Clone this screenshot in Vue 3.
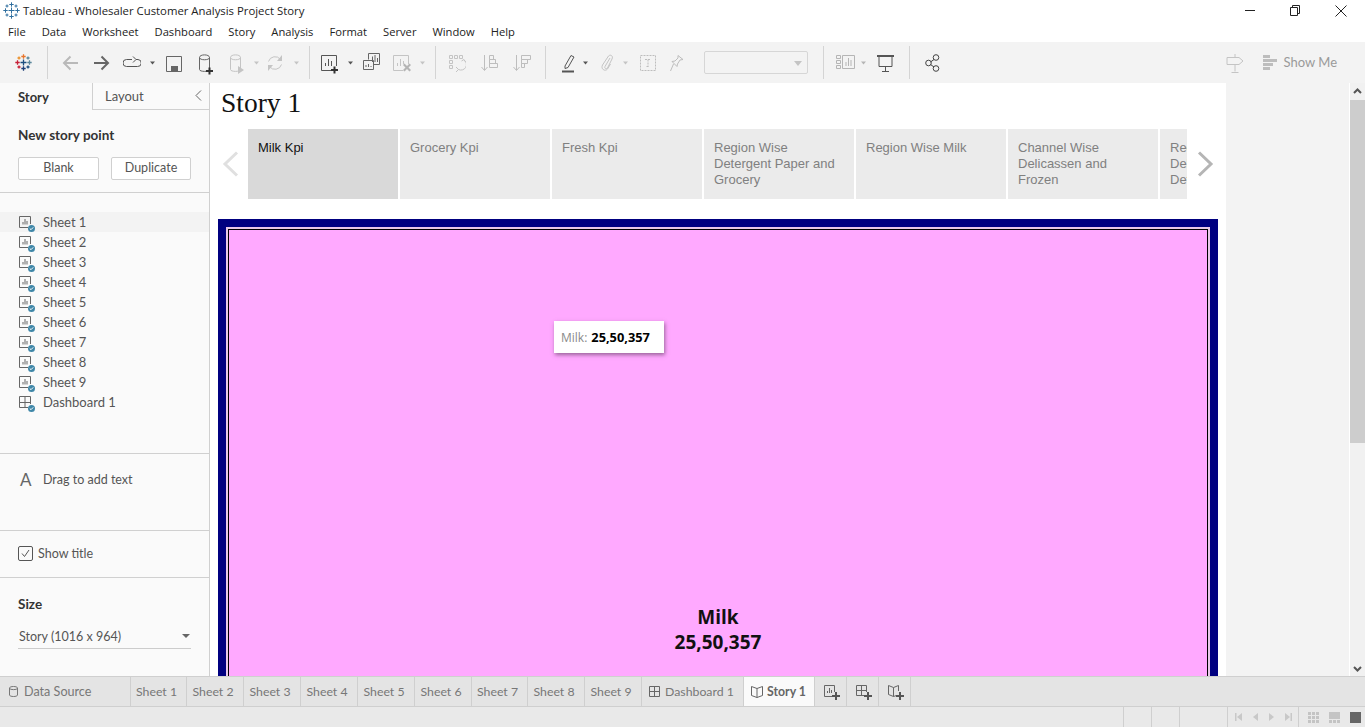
<script setup>
const menus = ['File', 'Data', 'Worksheet', 'Dashboard', 'Story', 'Analysis', 'Format', 'Server', 'Window', 'Help']

const plus = 'M9.5 16.5h2V19H14v2h-2.5v2.5h-2V21H7v-2h2.5z'
const cyl = 'M.5 6.5c0-3.5 10-3.5 10 0v12c0 2.5-10 2.5-10 0zM.5 6.5c0 3 10 3 10 0'
const sep = { kind: 'sep' }
const caret = (gap, c = '#555') => ({ gap, w: 5, f: 'M0 10.5h5L2.5 13.5z', fc: c })

const tools = [
  { gap: 15, w: 17, kind: 'logo' },
  { ...sep, gap: 15 },
  { gap: 14, w: 16, s: 'M16 12H2M8.5 5.5 2 12l6.5 6.5', c: '#b9b9b9', sw: 2 },
  { gap: 16, w: 16, s: 'M0 12h14M7.5 5.5 14 12l-6.5 6.5', c: '#666', sw: 2 },
  { gap: 13, w: 18, s: 'M9 8.5H3.5a3.5 3.5 0 0 0 0 7h11a3.5 3.5 0 0 0 .5-7h-2M10 5.5l3 3-3 3', c: '#555' },
  caret(9),
  { gap: 11, w: 16, s: 'M.5 5.5h15v15H.5z', f: 'M5 15h7v5H5z', c: '#666', fc: '#666' },
  { gap: 17, w: 15, s: cyl, f: plus, c: '#666', fc: '#333' },
  { gap: 16, w: 15, s: cyl, f: 'M8 15l6 4-6 4z', c: '#c4c4c4', fc: '#c4c4c4' },
  caret(9, '#c4c4c4'),
  { gap: 8, w: 16, s: 'M1.5 10.5a6.8 6.8 0 0 1 12-2M14.5 13.5a6.8 6.8 0 0 1-12 2', f: 'M15 4v6h-5zM1 20v-6h5z', c: '#c4c4c4', fc: '#c4c4c4' },
  caret(11, '#c4c4c4'),
  { ...sep, gap: 10 },
  { gap: 11, w: 18, s: 'M12 19.500H.5v-15h15V15M4.500 15v-3M7.500 15V8M10.500 15v-5', f: 'M12.500 15.500h2V18H17v2h-2.500v2.500h-2V20H10v-2h2.500z', c: '#555', fc: '#333' },
  caret(9),
  { gap: 10, w: 17, s: 'M5.500 8.500V2.500h11v11H10.500M.5 9.500h10v9H.5zM9.500 11V5.500M12 11V4M14.500 11V7M3 16v-2M5.500 16v-3M8 16v-1', c: '#666' },
  { gap: 13, w: 18, s: 'M10 19.500H.5v-15h15V13M4.500 15v-3M7.500 15V8M10.500 13v-3', f: 'M10 14l1.500-1.500 2.500 2.500 2.500-2.500L18 14l-2.500 2.500L18 19l-1.500 1.500L14 18l-2.500 2.500L10 19l2.500-2.500z', c: '#c4c4c4', fc: '#b4b4b4' },
  caret(9, '#c4c4c4'),
  { ...sep, gap: 10 },
  { gap: 13, w: 17, s: 'M.5 4.500h3v3h-3zM5.500 4.500h3v3h-3zM10.500 4.500h3v3h-3zM.5 9.500h3v3h-3zM.5 14.500h3v3h-3zM15 9a5.500 5.500 0 0 1-5.500 9.500M7 16l2.500 2.500L7 21M12.500 10 15 8.500l1.500 2.500', c: '#c4c4c4' },
  { gap: 15, w: 17, s: 'M3.500 4v15M.5 16l3 3.500 3-3.500M8.500 4.500h4v4h-4zM8.500 8.500h6v4h-6zM8.500 12.500h8v4h-8z', c: '#bdbdbd' },
  { gap: 15, w: 18, s: 'M3.500 4v15M.5 16l3 3.500 3-3.500M8.500 4.500h9v4h-9zM8.500 8.500h6v4h-6zM8.500 12.500h3v4h-3z', c: '#bdbdbd' },
  { ...sep, gap: 14 },
  { gap: 16, w: 13, s: 'M3 15 9 4.500l3 1.500L6 16.500l-3 1z', f: 'M0 19.500h12v2H0z', c: '#555', fc: '#555' },
  caret(8),
  { gap: 12, w: 13, s: 'M10 7 5 15.500c-1 2 1.500 3 2.500 1.500L12 8c1.500-3-1.500-5-3.500-3L2.500 14c-2 4 2.500 7 5 4l3-5', c: '#c4c4c4' },
  caret(10, '#c4c4c4'),
  { gap: 12, w: 16, s: 'M.5 4.500h15v15H.5zM5 8.500h6M8 8.500v7M6.500 15.500h3', c: '#bdbdbd', dash: true },
  { gap: 14, w: 14, s: 'M8 4.500l5 4-3 .5-2.500 4-.5 2.500-5-5 3-.5 3-3zM3.500 13l-3 7', c: '#bdbdbd' },
  { gap: 20, kind: 'combo' },
  { ...sep, gap: 15 },
  { gap: 12, w: 20, s: 'M.5 4.500h4v3h-4zM.5 9.500h4v3h-4zM.5 14.500h4v3h-4zM6.500 4.500h12v13h-12zM10 15v-4M12.500 15V7M15 15V9', c: '#b5b5b5' },
  caret(5, '#b5b5b5'),
  { gap: 11, w: 17, s: 'M2 6v9.500h13V6M8.500 15.500v5M5 20.500h7', f: 'M0 4h17v2H0z', c: '#555', fc: '#555' },
  { ...sep, gap: 15 },
  { gap: 15, w: 15, s: 'M5.500 11 9 8.500M5.500 13.500 9 16', c: '#444', circles: true },
]

const sheets = ['Sheet 1', 'Sheet 2', 'Sheet 3', 'Sheet 4', 'Sheet 5', 'Sheet 6', 'Sheet 7', 'Sheet 8', 'Sheet 9']
const tabWidths = [56, 57, 57, 57, 57, 57, 56, 57, 57]
const tabs = sheets.map((name, i) => ({ name, w: tabWidths[i] }))

const points = [
  { text: 'Milk Kpi', on: true },
  { text: 'Grocery Kpi' },
  { text: 'Fresh Kpi' },
  { text: 'Region Wise Detergent Paper and Grocery' },
  { text: 'Region Wise Milk' },
  { text: 'Channel Wise Delicassen and Frozen' },
  { text: 'Region Wise Delicassen and Detergent' },
]

// tableau mark, same crosses in title bar and toolbar
const crosses = [
  { x: 8.5, y: 8.5, r: 3, c: '#1f4f7f' },
  { x: 8.5, y: 2.5, r: 2.2, c: '#e8762d' },
  { x: 8.5, y: 14.5, r: 2.2, c: '#1f3f77' },
  { x: 2.5, y: 8.5, r: 2.2, c: '#c72037' },
  { x: 14.5, y: 8.5, r: 2.2, c: '#5b879b' },
  { x: 4, y: 4, r: 1.5, c: '#eb912b' },
  { x: 13, y: 4, r: 1.5, c: '#5b879b' },
  { x: 4, y: 13, r: 1.5, c: '#c72037' },
  { x: 13, y: 13, r: 1.5, c: '#1f4f7f' },
]
const crossPath = (k) => `M${k.x - k.r} ${k.y}h${k.r * 2}M${k.x} ${k.y - k.r}v${k.r * 2}`
</script>

<template>
  <div class="app">
    <header class="titlebar">
      <svg class="app-icon" width="17" height="17" viewBox="0 0 17 17" fill="none" stroke="#2f6f9f" stroke-width="1">
        <path v-for="k in crosses" :key="k.x + '-' + k.y" :d="crossPath(k)" />
      </svg>
      <span class="title-text">Tableau - Wholesaler Customer Analysis Project Story</span>
      <div class="win-btns">
        <svg width="11" height="11" viewBox="0 0 11 11"><path d="M0 5.500h10" stroke="#222" /></svg>
        <svg width="11" height="11" viewBox="0 0 11 11" fill="none" stroke="#222"><path d="M.5 2.500h7v8h-7zM2.500 2.500v-2h7v8h-2" /></svg>
        <svg width="12" height="12" viewBox="0 0 12 12" fill="none" stroke="#222"><path d="M.5.5l11 11M11.500.5l-11 11" /></svg>
      </div>
    </header>

    <nav class="menubar">
      <span v-for="m in menus" :key="m">{{ m }}</span>
    </nav>

    <div class="toolbar">
      <template v-for="(t, i) in tools" :key="i">
        <div v-if="t.kind === 'sep'" class="tool-sep" :style="{ marginLeft: t.gap + 'px' }"></div>
        <div v-else-if="t.kind === 'combo'" class="combo" :style="{ marginLeft: t.gap + 'px' }"><i class="combo-caret"></i></div>
        <svg v-else-if="t.kind === 'logo'" width="17" height="17" viewBox="0 0 17 17" fill="none" stroke-width="1.300" :style="{ marginLeft: t.gap + 'px' }">
          <path v-for="k in crosses" :key="k.x + '-' + k.y" :d="crossPath(k)" :stroke="k.c" />
        </svg>
        <svg v-else :width="t.w" height="24" :viewBox="`0 0 ${t.w} 24`" fill="none" :style="{ marginLeft: t.gap + 'px' }">
          <path v-if="t.s" :d="t.s" :stroke="t.c" :stroke-width="t.sw || 1" :stroke-dasharray="t.dash ? '2 1' : null" />
          <path v-if="t.f" :d="t.f" :fill="t.fc" />
          <g v-if="t.circles" :stroke="t.c">
            <circle cx="3.500" cy="12" r="2.800" />
            <circle cx="11" cy="6.500" r="2.800" />
            <circle cx="11" cy="17.500" r="2.800" />
          </g>
        </svg>
      </template>
      <div class="tool-right">
        <svg width="18" height="24" viewBox="0 0 18 24" fill="none" stroke="#c4c4c4"><path d="M1 6.500h12l4 3.500-4 3.500H1zM9 3v3.500M9 13.500v7M5.500 21.500h7" /></svg>
        <svg class="showme-bars" width="14" height="16" viewBox="0 0 14 16" fill="#bdbdbd"><path d="M0 0h7v3H0zM0 4h14v3H0zM0 8h10v3H0zM0 12h7v3H0z" /></svg>
        <span class="showme">Show Me</span>
      </div>
    </div>

    <div class="body">
      <aside class="side">
        <div class="side-tabs">
          <div class="side-tab active">Story</div>
          <div class="side-tab">Layout</div>
          <svg class="collapse" width="7" height="11" viewBox="0 0 7 11" fill="none" stroke="#666"><path d="M6 .5 1 5.500l5 5" /></svg>
        </div>

        <section class="new-point">
          <h3>New story point</h3>
          <div class="new-btns">
            <button class="btn blank">Blank</button>
            <button class="btn dup">Duplicate</button>
          </div>
        </section>

        <section class="sheet-list">
          <div v-for="(name, i) in sheets" :key="name" class="sheet-row" :class="{ hover: i === 0 }">
            <svg class="sheet-icon" width="16" height="16" viewBox="0 0 16 16" fill="none">
              <path d="M9 11.500H.5V.5h11V8M4 8.500V6M6 8.500V3M8 8.500V5" stroke="#666" />
              <circle cx="12.500" cy="12.500" r="3.500" fill="#3f87a8" />
              <path d="M10.800 12.500l1.200 1.200 2.200-2.300" stroke="#fff" />
            </svg>
            <span>{{ name }}</span>
          </div>
          <div class="sheet-row">
            <svg class="sheet-icon" width="16" height="16" viewBox="0 0 16 16" fill="none">
              <path d="M9 11.500H.5V.5h11V8M.5 6.500h11M6 .5v11" stroke="#666" />
              <circle cx="12.500" cy="12.500" r="3.500" fill="#3f87a8" />
              <path d="M10.800 12.500l1.200 1.200 2.200-2.300" stroke="#fff" />
            </svg>
            <span>Dashboard 1</span>
          </div>
        </section>

        <section class="drag-text">
          <span class="big-a">A</span>
          <span>Drag to add text</span>
        </section>

        <section class="show-title">
          <svg width="15" height="15" viewBox="0 0 15 15" fill="none" stroke="#555"><rect x=".5" y=".5" width="14" height="14" rx="1.500" /><path d="M4 7.500l2.500 3L11 4" /></svg>
          <span>Show title</span>
        </section>

        <section class="size">
          <h3>Size</h3>
          <div class="size-select">
            <span>Story (1016 x 964)</span>
            <i class="size-caret"></i>
          </div>
        </section>
      </aside>

      <main class="story">
        <h1 class="story-title">Story 1</h1>
        <div class="nav-row">
          <svg class="nav-arrow" width="18" height="26" viewBox="0 0 18 26" fill="none" stroke="#e0e0e0" stroke-width="3"><path d="M15 1.500 3 13l12 11.500" /></svg>
          <div class="points">
            <div v-for="p in points" :key="p.text" class="point" :class="{ on: p.on }">{{ p.text }}</div>
          </div>
          <svg class="nav-arrow next" width="18" height="26" viewBox="0 0 18 26" fill="none" stroke="#b5b5b5" stroke-width="3"><path d="M3 1.500 15 13 3 24.500" /></svg>
        </div>

        <div class="frame">
          <div class="frame-inner">
            <div class="kpi">
              <div>Milk</div>
              <div>25,50,357</div>
            </div>
          </div>
          <div class="tooltip"><span>Milk:</span> <b>25,50,357</b></div>
        </div>
      </main>

      <div class="gutter"></div>

      <div class="scrollbar">
        <svg class="sb-up" width="9" height="6" viewBox="0 0 9 6" fill="none" stroke="#555" stroke-width="2"><path d="M1 5l3.500-3.500L8 5" /></svg>
        <div class="sb-thumb"></div>
        <svg class="sb-down" width="9" height="6" viewBox="0 0 9 6" fill="none" stroke="#555" stroke-width="2"><path d="M1 1l3.500 3.500L8 1" /></svg>
      </div>
    </div>

    <div class="tabbar">
      <div class="tab source">
        <svg width="9" height="11" viewBox="0 0 9 11" fill="none" stroke="#777"><path d="M.5 2c0-2 8-2 8 0v7c0 2-8 2-8 0zM.5 2.500c1 1.500 7 1.500 8 0" /></svg>
        <span>Data Source</span>
      </div>
      <div v-for="t in tabs" :key="t.name" class="tab sheet" :style="{ width: t.w + 'px' }">{{ t.name }}</div>
      <div class="tab dash">
        <svg width="12" height="11" viewBox="0 0 12 11" fill="none" stroke="#666"><path d="M.5.5h10v10H.5zM.5 5.500h10M5.500.5v10" /></svg>
        <span>Dashboard 1</span>
      </div>
      <div class="tab current">
        <svg width="12" height="12" viewBox="0 0 12 12" fill="none" stroke="#666"><path d="M6 2.500 .5.5v9L6 11.500l5.500-2v-9zM6 2.500v9" /></svg>
        <span>Story 1</span>
      </div>
      <div class="tab add">
        <svg width="18" height="16" viewBox="0 0 18 16" fill="none"><path d="M8 11.500H.5V.5h10V7M3.500 8V6M5.500 8V3M7.500 8V5" stroke="#666" /><path d="M11 7h2v3h3v2h-3v3h-2v-3H8v-2h3z" fill="#555" /></svg>
      </div>
      <div class="tab add">
        <svg width="18" height="16" viewBox="0 0 18 16" fill="none"><path d="M8 10.500H.5V.5h10V7M.5 5.500h10M5.500.5v10" stroke="#666" /><path d="M11 7h2v3h3v2h-3v3h-2v-3H8v-2h3z" fill="#555" /></svg>
      </div>
      <div class="tab add">
        <svg width="18" height="16" viewBox="0 0 18 16" fill="none"><path d="M5.500 2.500 .5.500v9l5 2 3-1M5.500 2.500l5-2V6M5.500 2.500v9" stroke="#666" /><path d="M11 7h2v3h3v2h-3v3h-2v-3H8v-2h3z" fill="#555" /></svg>
      </div>
    </div>

    <footer class="statusbar">
      <div class="st-cell first"></div>
      <div class="st-cell first"></div>
      <div class="st-cell wide"></div>
      <div class="st-nav">
        <svg width="7" height="8" viewBox="0 0 7 8" fill="#c8c8c8"><path d="M0 0h1.500v8H0zM7 0v8L2 4z" /></svg>
        <svg width="5" height="8" viewBox="0 0 5 8" fill="#c8c8c8"><path d="M5 0v8L0 4z" /></svg>
        <svg width="5" height="8" viewBox="0 0 5 8" fill="#c8c8c8"><path d="M0 0v8l5-4z" /></svg>
        <svg width="7" height="8" viewBox="0 0 7 8" fill="#c8c8c8"><path d="M5.500 0H7v8H5.500zM0 0v8l5-4z" /></svg>
      </div>
      <div class="st-views">
        <svg width="11" height="11" viewBox="0 0 11 11" fill="#c4c4c4"><path d="M0 0h3v3H0zM4 0h3v3H4zM8 0h3v3H8zM0 4h3v3H0zM4 4h3v3H4zM8 4h3v3H8zM0 8h3v3H0zM4 8h3v3H4zM8 8h3v3H8z" /></svg>
        <svg width="11" height="11" viewBox="0 0 11 11" fill="#c4c4c4"><path d="M0 0h11v7H0zM0 8h3v3H0zM4 8h3v3H4zM8 8h3v3H8z" /></svg>
        <svg width="11" height="11" viewBox="0 0 11 11" fill="#666"><path d="M0 0h11v11H0z" /></svg>
      </div>
    </footer>
  </div>
</template>

<style>
html, body { margin: 0; overflow: hidden; }
</style>

<style scoped>
.app {
  width: 1365px;
  height: 727px;
  display: flex;
  flex-direction: column;
  overflow: hidden;
  background: #fff;
  font-family: Lato, "Open Sans", sans-serif;
  color: #555;
}

.titlebar {
  height: 21px;
  display: flex;
  align-items: center;
  flex-shrink: 0;
  padding-left: 3px;
  font-family: "Open Sans", sans-serif;
  font-size: 11.350px;
  color: #222;
}
.app-icon { margin-right: 3px; }
.win-btns {
  margin-left: auto;
  display: flex;
  align-items: center;
  gap: 34px;
  padding-right: 18px;
}

.menubar {
  height: 21px;
  display: flex;
  align-items: center;
  gap: 16px;
  flex-shrink: 0;
  padding-left: 8px;
  font-family: "Open Sans", sans-serif;
  font-size: 11.200px;
  color: #222;
}

.toolbar {
  height: 41px;
  display: flex;
  align-items: center;
  flex-shrink: 0;
  background: #f3f3f3;
}
.toolbar svg { flex-shrink: 0; }
.tool-sep {
  width: 1px;
  height: 33px;
  background: #d4d4d4;
}
.combo {
  width: 104px;
  height: 23px;
  box-sizing: border-box;
  border: 1px solid #d6d6d6;
  border-radius: 2px;
  position: relative;
}
.combo-caret {
  position: absolute;
  right: 5px;
  top: 9px;
  border: 4px solid transparent;
  border-top: 5px solid #c4c4c4;
  border-bottom: 0;
}
.tool-right {
  margin-left: auto;
  display: flex;
  align-items: center;
  padding-right: 28px;
}
.showme-bars { margin-left: 19px; }
.showme {
  margin-left: 7px;
  margin-top: -2px;
  font-size: 13px;
  color: #9a9a9a;
}

.body {
  height: 593px;
  flex-shrink: 0;
  display: flex;
}

.side {
  width: 210px;
  flex-shrink: 0;
  box-sizing: border-box;
  display: flex;
  flex-direction: column;
  background: #fafafa;
  border-right: 1px solid #d0d0d0;
  font-size: 12.500px;
}
.side-tabs {
  height: 27px;
  flex-shrink: 0;
  box-sizing: border-box;
  display: flex;
  position: relative;
  border-bottom: 1px solid #d0d0d0;
}
.side-tab {
  display: flex;
  align-items: center;
  padding-left: 12px;
  width: 80px;
  font-size: 13px;
  color: #555;
  border-left: 1px solid #d0d0d0;
}
.side-tab.active {
  width: 74px;
  height: 27px;
  padding-left: 18px;
  background: #fafafa;
  border-left: 0;
  font-weight: 700;
  color: #333;
}
.collapse {
  position: absolute;
  right: 7px;
  top: 7px;
}
.new-point {
  height: 83px;
  flex-shrink: 0;
  box-sizing: border-box;
  padding: 17px 18px 0;
  border-bottom: 1px solid #d0d0d0;
}
h3 {
  margin: 0;
  font-size: 13.500px;
  line-height: 17px;
  font-weight: 700;
  color: #333;
}
.new-btns {
  display: flex;
  gap: 12px;
  margin-top: 13px;
}
.btn {
  height: 23px;
  padding: 0 0 3px;
  box-sizing: border-box;
  background: #fff;
  border: 1px solid #d0d0d0;
  border-radius: 2px;
  font-family: inherit;
  font-size: 12.500px;
  color: #555;
}
.blank { width: 81px; }
.dup { width: 80px; }

.sheet-list {
  height: 261px;
  flex-shrink: 0;
  box-sizing: border-box;
  padding-top: 19px;
  border-bottom: 1px solid #d0d0d0;
}
.sheet-row {
  height: 20px;
  display: flex;
  align-items: center;
  padding-left: 19px;
  box-sizing: border-box;
  font-size: 13px;
}
.sheet-row.hover { background: #f3f3f3; }
.sheet-icon { margin-right: 8px; margin-top: 4px; }

.drag-text {
  height: 77px;
  flex-shrink: 0;
  box-sizing: border-box;
  display: flex;
  align-items: center;
  padding: 0 0 26px 20px;
  font-size: 12.500px;
  border-bottom: 1px solid #d0d0d0;
}
.big-a {
  width: 23px;
  font-size: 17px;
  color: #666;
}
.show-title {
  height: 47px;
  flex-shrink: 0;
  box-sizing: border-box;
  display: flex;
  align-items: center;
  gap: 5px;
  padding: 0 0 1px 18px;
  font-size: 12.500px;
  border-bottom: 1px solid #d0d0d0;
}
.size {
  flex: 1;
  padding: 18px 18px 0;
}
.size-select {
  width: 173px;
  height: 25px;
  margin-top: 11px;
  box-sizing: border-box;
  display: flex;
  align-items: center;
  justify-content: space-between;
  padding: 0 0 0 1px;
  border-bottom: 1px solid #ccc;
  font-size: 12.500px;
}
.size-caret {
  margin-right: 1px;
  border: 4px solid transparent;
  border-top: 4px solid #666;
  border-bottom: 0;
}

.story {
  width: 1016px;
  flex-shrink: 0;
  overflow: hidden;
  background: #fff;
}
.story-title {
  height: 46px;
  margin: 0;
  padding-left: 11px;
  font-family: "Liberation Serif", serif;
  font-size: 27.500px;
  line-height: 40px;
  font-weight: 400;
  color: #111;
}
.nav-row {
  height: 70px;
  display: flex;
  align-items: center;
  padding-left: 12px;
}
.nav-arrow { flex-shrink: 0; }
.nav-arrow.next { margin-left: 9px; }
.points {
  width: 939px;
  margin-left: 8px;
  display: flex;
  gap: 2px;
  overflow: hidden;
}
.point {
  width: 150px;
  height: 70px;
  flex-shrink: 0;
  box-sizing: border-box;
  padding: 11px 10px 0;
  background: #ebebeb;
  font-family: "Liberation Sans", Arial, sans-serif;
  font-size: 13px;
  line-height: 16px;
  color: #808080;
}
.point.on {
  background: #d9d9d9;
  color: #111;
}

.frame {
  position: relative;
  width: 1000px;
  height: 700px;
  margin: 20px 0 0 8px;
  box-sizing: border-box;
  border: 8px solid #000080;
  background: #e8c8e8;
  padding: 2px;
}
.frame-inner {
  height: 100%;
  box-sizing: border-box;
  border: 1px solid #000;
  background: #ffa9ff;
  display: flex;
  justify-content: center;
}
.kpi {
  margin-top: 375px;
  text-align: center;
  font-family: "Open Sans", sans-serif;
  font-size: 19px;
  line-height: 25px;
  font-weight: 700;
  color: #111;
}
.tooltip {
  position: absolute;
  left: 328px;
  top: 94px;
  width: 110px;
  height: 32px;
  box-sizing: border-box;
  padding-left: 7px;
  display: flex;
  align-items: center;
  gap: 4px;
  background: #fff;
  box-shadow: 1px 2px 4px rgba(70, 40, 70, 0.55);
  font-family: "Open Sans", sans-serif;
  font-size: 12px;
  color: #8a8a8a;
}
.tooltip b { color: #000; font-size: 12.800px; }

.gutter {
  width: 123px;
  flex-shrink: 0;
  background: #f3f3f3;
  border-right: 1px solid #fff;
}
.scrollbar {
  flex: 1;
  display: flex;
  flex-direction: column;
  align-items: center;
  background: #f1f1f1;
}
.sb-up { margin: 5px 0 6px; }
.sb-thumb {
  width: 100%;
  height: 343px;
  background: #cdcdcd;
}
.sb-down { margin-top: auto; margin-bottom: 4px; }

.tabbar {
  height: 31px;
  flex-shrink: 0;
  box-sizing: border-box;
  display: flex;
  background: #e4e4e4;
  border-top: 1px solid #cfcfcf;
  border-bottom: 1px solid #cfcfcf;
  font-size: 12.300px;
  color: #777;
}
.tab {
  height: 29px;
  flex-shrink: 0;
  box-sizing: border-box;
  display: flex;
  align-items: center;
  justify-content: center;
  gap: 4px;
  border-right: 1px solid #cfcfcf;
}
.tab.sheet { padding-right: 4px; }
.tab.source {
  width: 131px;
  justify-content: flex-start;
  gap: 6px;
  padding-left: 9px;
  font-size: 12.600px;
}
.tab.dash {
  width: 102px;
  justify-content: flex-start;
  padding-left: 7px;
}
.tab.current {
  width: 71px;
  justify-content: flex-start;
  padding-left: 7px;
  background: #fafafa;
  font-weight: 700;
  color: #666;
}
.tab.add { width: 32px; padding: 3px 0 0 5px; }

.statusbar {
  flex: 1;
  display: flex;
  justify-content: flex-end;
  background: #e9e9e9;
}
.st-cell {
  border-left: 1px solid #cfcfcf;
}
.st-cell.first { width: 27px; }
.st-cell.wide { width: 47px; }
.st-nav {
  width: 71px;
  box-sizing: border-box;
  display: flex;
  align-items: center;
  justify-content: center;
  gap: 11px;
  border-left: 1px solid #cfcfcf;
}
.st-views {
  width: 67px;
  box-sizing: border-box;
  display: flex;
  align-items: center;
  gap: 10px;
  padding-left: 9px;
  border-left: 1px solid #cfcfcf;
}
</style>
